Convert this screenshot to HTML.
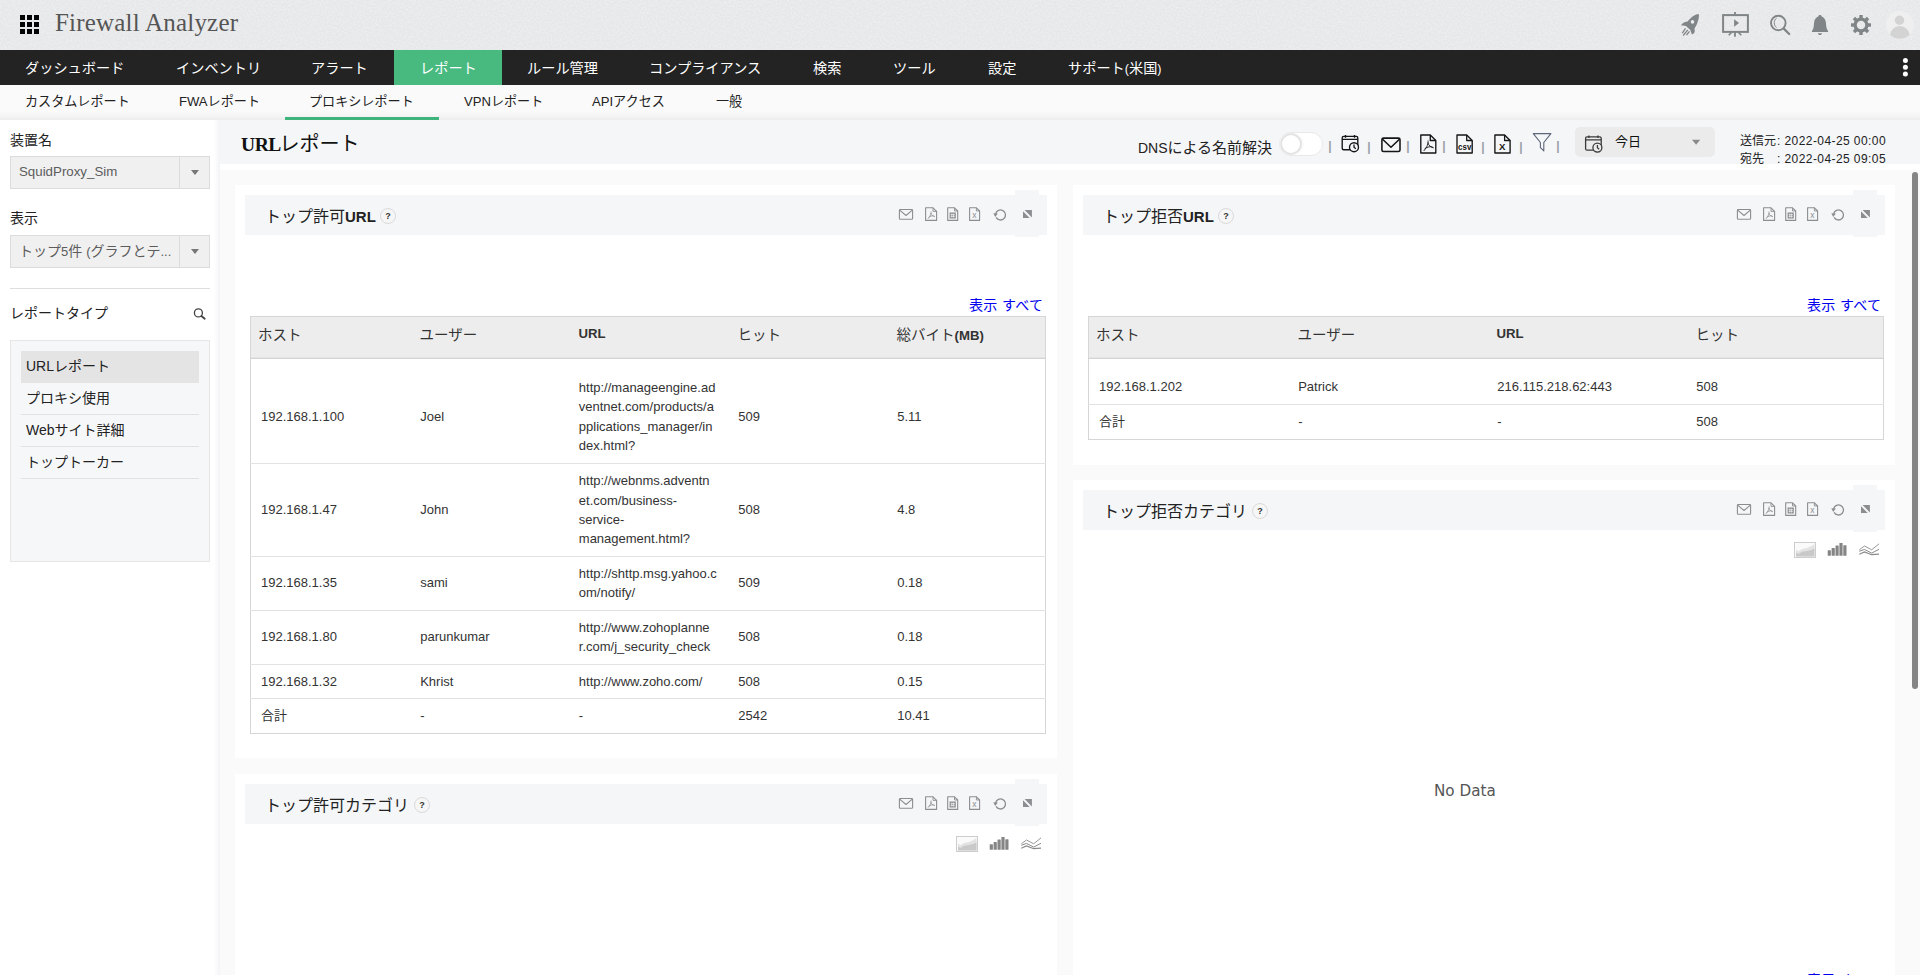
<!DOCTYPE html>
<html lang="ja">
<head>
<meta charset="utf-8">
<title>Firewall Analyzer</title>
<style>
*{box-sizing:border-box;margin:0;padding:0}
html,body{width:1920px;height:975px;overflow:hidden;background:#fafafa}
body{font-family:"Liberation Sans","Noto Sans CJK JP",sans-serif;font-size:13px;color:#333;position:relative}
.abs{position:absolute}
.t{position:absolute;white-space:nowrap;line-height:20px}
/* header */
#hdr{left:0;top:0;width:1920px;height:50px;background:#e6e7e9}
#logo{left:55px;top:8px;font-family:"Liberation Serif","Noto Serif CJK SC",serif;font-size:25px;line-height:30px;color:#555;letter-spacing:.2px}
/* nav */
#nav{left:0;top:50px;width:1920px;height:35px;background:#232323}
#nav .t{color:#fff;font-size:14.200px;top:8px;line-height:20px}
#navact{left:394px;top:0;width:108px;height:35px;background:#48ba80}
/* subnav */
#sub{left:0;top:85px;width:1920px;height:35px;background:linear-gradient(to bottom,#fafafa 0,#fafafa 26px,#f3f3f3 32px,#ececec 35px)}
#sub .t{color:#222;font-size:13.100px;top:7px;line-height:20px}
#subact{left:285px;top:32px;width:154px;height:3px;background:#3fb37c}
/* sidebar */
#side{left:0;top:120px;width:220px;height:855px;background:linear-gradient(to right,#fff 0,#fff 214px,#f9f9fb 217px,#f2f3f6 220px)}
.lbl{font-size:14px;color:#222}
.sel{position:absolute;left:10px;width:200px;height:33px;background:#f0f0f0;border:1px solid #dcdcdc}
.sel .v{position:absolute;left:8px;top:5px;line-height:20px;font-size:13.300px;color:#5c5c5c;white-space:nowrap}
.sel .d{position:absolute;left:168px;top:0;width:1px;height:31px;background:#dcdcdc}
.sel .c{position:absolute;left:180px;top:13px;width:0;height:0;border-left:4px solid transparent;border-right:4px solid transparent;border-top:5px solid #777}
#list{left:10px;top:220px;width:200px;height:222px;background:#f6f7f9;border:1px solid #e6e6e6}
.li{position:absolute;left:10px;width:178px;height:32px;border-bottom:1px solid #e2e2e2;font-size:14px;color:#222;line-height:20px;padding:5px 0 0 5px;white-space:nowrap}
.li.on{background:#e4e4e4;border-bottom-color:#e4e4e4}
/* main */
#tbar{left:220px;top:120px;width:1700px;height:44px;background:#f5f6f8}
#strip{left:220px;top:164px;width:1700px;height:6px;background:#fff}
#ptitle{left:241px;top:130px;font-size:20px;line-height:28px;color:#111}
#ptitle b{font-family:"Liberation Serif","Noto Serif CJK SC",serif;font-weight:bold;font-size:19.500px;letter-spacing:-.4px;margin-right:-1.500px}
.card{position:absolute;background:#fff}
.chd{position:absolute;left:10px;top:10px;height:40px;background:#f5f6f8}
.chd .ttl{position:absolute;left:20px;top:10.500px;font-size:16px;line-height:22px;color:#222;white-space:nowrap}
.chd .ttl b{font-size:15px}
.q{position:absolute;width:16px;height:16px;border-radius:50%;border:1px solid #dadada;background:#f6f6f6;font-size:9px;font-weight:bold;color:#333;line-height:14px;text-align:center}
.exp{position:absolute;top:-5px;width:24px;height:47px;background:#f5f6f8}
.all{position:absolute;font-size:14px;line-height:20px;color:#0000ee;white-space:nowrap;letter-spacing:.35px}
/* tables */
table{position:absolute;border-collapse:collapse;table-layout:fixed;font-size:13px;color:#333}
table,th,td{border:0}
table{border:1px solid #d6d6d6}
th{background:#ededed;text-align:left;font-weight:normal;font-size:14.500px;color:#333;height:42px;padding:0 0 9px 7px;border-bottom:1px solid #d4d4d4;box-shadow:inset 0 -1px 0 #e4e4e4;vertical-align:middle;white-space:nowrap}
td{padding:0 0 0 10px;border-top:1px solid #e2e2e2;vertical-align:middle;line-height:19.3px}
tr.f td{padding-top:11px;border-top:0}
td.u{padding-left:10.300px}
td+td{padding-left:10.700px}
tr.s td{padding-bottom:1px}
th b{font-size:13.200px}
.dt{font-size:12px;color:#222;line-height:18px;letter-spacing:.42px}
.sp{top:139px;font-size:12px;line-height:14px;color:#9a9ea5;width:4px;text-align:center;font-weight:bold}
svg{position:absolute;overflow:visible}
</style>
</head>
<body>

<!-- HEADER -->
<div id="hdr" class="abs">
  <svg width="1920" height="50" style="left:0;top:0"><filter id="nz" x="0" y="0" width="100%" height="100%"><feTurbulence type="fractalNoise" baseFrequency=".55" numOctaves="2" seed="7" result="n"/><feColorMatrix type="matrix" values="0 0 0 0 1  0 0 0 0 1  0 0 0 0 1  1.6 0 0 0 -.55"/></filter><rect width="1920" height="50" filter="url(#nz)" opacity=".42"/></svg>
  <div id="logo" class="t">Firewall Analyzer</div>
</div>

<!-- NAV -->
<div id="nav" class="abs">
  <div id="navact" class="abs"></div>
  <div class="t" style="left:25px">ダッシュボード</div>
  <div class="t" style="left:176px">インベントリ</div>
  <div class="t" style="left:311px">アラート</div>
  <div class="t" style="left:420px">レポート</div>
  <div class="t" style="left:527px">ルール管理</div>
  <div class="t" style="left:649px">コンプライアンス</div>
  <div class="t" style="left:813px">検索</div>
  <div class="t" style="left:893px">ツール</div>
  <div class="t" style="left:988px">設定</div>
  <div class="t" style="left:1068px">サポート<span style="font-size:12.500px">(</span>米国<span style="font-size:12.500px">)</span></div>
</div>

<!-- SUBNAV -->
<div id="sub" class="abs">
  <div id="subact" class="abs"></div>
  <div class="t" style="left:25px">カスタムレポート</div>
  <div class="t" style="left:179px">FWAレポート</div>
  <div class="t" style="left:309px">プロキシレポート</div>
  <div class="t" style="left:464px">VPNレポート</div>
  <div class="t" style="left:592px">APIアクセス</div>
  <div class="t" style="left:716px">一般</div>
</div>

<!-- MAIN BG -->
<div id="tbar" class="abs"></div>
<div id="strip" class="abs"></div>

<!-- SIDEBAR -->
<div id="side" class="abs">
  <div class="t lbl" style="left:10px;top:10px">装置名</div>
  <div class="sel" style="top:36px"><div class="v">SquidProxy_Sim</div><div class="d"></div><div class="c"></div></div>
  <div class="t lbl" style="left:10px;top:88px">表示</div>
  <div class="sel" style="top:115px"><div class="v" style="font-size:14px">トップ<span style="font-size:13px">5</span>件 <span style="font-size:13px">(</span>グラフとテ<span style="font-size:13px">...</span></div><div class="d"></div><div class="c"></div></div>
  <div class="abs" style="left:10px;top:168px;width:200px;height:1px;background:#dedede"></div>
  <div class="t lbl" style="left:10px;top:183px">レポートタイプ</div>
  <div id="list" class="abs">
    <div class="li on" style="top:10px">URLレポート</div>
    <div class="li" style="top:42px">プロキシ使用</div>
    <div class="li" style="top:74px">Webサイト詳細</div>
    <div class="li" style="top:106px">トップトーカー</div>
  </div>
</div>

<div id="ptitle" class="t"><b>URL</b>レポート</div>

<!-- TOOLBAR -->
<div id="tools" class="abs" style="left:0;top:0">
  <div class="t" style="left:1138px;top:138.400px;font-size:15px;color:#222"><span style="font-size:14px">DNS</span>による名前解決</div>
  <div class="abs" style="left:1279px;top:131.700px;width:44px;height:24.300px;border-radius:12.500px;background:#fff;border:1px solid #e9e9e9"></div>
  <div class="abs" style="left:1281.900px;top:134.800px;width:18.600px;height:18.600px;border-radius:50%;background:#fff;box-shadow:0 0 0 1.700px #e2e2e2,1.500px 0 3px 1px rgba(0,0,0,.08)"></div>
  <div class="abs" style="left:1575px;top:127px;width:140px;height:30px;border-radius:5px;background:#ebebeb"></div>
  <div class="t" style="left:1615px;top:132px;font-size:13px;color:#111">今日</div>
  <div class="t" style="left:1740px;top:132px;font-size:12px;color:#222;line-height:18px">送信元</div><div class="t dt" style="left:1777px;top:132px">: 2022-04-25 00:00</div>
  <div class="t" style="left:1740px;top:150.300px;font-size:12px;color:#222;line-height:18px">宛先</div>
  <div class="t dt" style="left:1777px;top:150.300px">: 2022-04-25 09:05</div>
  <div class="t sp" style="left:1328px">|</div><div class="t sp" style="left:1367px;top:140px">|</div><div class="t sp" style="left:1406px">|</div><div class="t sp" style="left:1442px">|</div><div class="t sp" style="left:1481px;top:140px">|</div><div class="t sp" style="left:1519px;top:140px">|</div><div class="t sp" style="left:1556px">|</div>
</div>

<!-- CARD 1 -->
<div class="card" style="left:235px;top:185px;width:822px;height:573px">
  <div class="chd" style="width:802px"><div class="exp" style="left:770px"></div><div class="ttl">トップ許可<b>URL</b></div><div class="q" style="left:135px;top:13px">?</div></div>
  <div class="all" style="left:734px;top:110px">表示 すべて</div>
  <table style="left:15px;top:131px;width:796px">
    <colgroup><col style="width:159px"><col style="width:159px"><col style="width:159px"><col style="width:159px"><col></colgroup>
    <tr><th>ホスト</th><th style="padding-left:10px">ユーザー</th><th style="padding-left:10px"><b class="s">URL</b></th><th style="padding-left:10px">ヒット</th><th style="padding-left:10px">総バイト<b>(MB)</b></th></tr>
    <tr class="f" style="height:105px"><td>192.168.1.100</td><td>Joel</td><td class="u">http://manageengine.ad<br>ventnet.com/products/a<br>pplications_manager/in<br>dex.html?</td><td>509</td><td>5.11</td></tr>
    <tr style="height:93px"><td>192.168.1.47</td><td>John</td><td class="u">http://webnms.adventn<br>et.com/business-<br>service-<br>management.html?</td><td>508</td><td>4.8</td></tr>
    <tr class="s" style="height:54px"><td>192.168.1.35</td><td>sami</td><td class="u">http://shttp.msg.yahoo.c<br>om/notify/</td><td>509</td><td>0.18</td></tr>
    <tr class="s" style="height:54px"><td>192.168.1.80</td><td>parunkumar</td><td class="u">http://www.zohoplanne<br>r.com/j_security_check</td><td>508</td><td>0.18</td></tr>
    <tr style="height:34px"><td>192.168.1.32</td><td>Khrist</td><td class="u">http://www.zoho.com/</td><td>508</td><td>0.15</td></tr>
    <tr style="height:35px"><td>合計</td><td>-</td><td class="u">-</td><td>2542</td><td>10.41</td></tr>
  </table>
</div>

<!-- CARD 2 -->
<div class="card" style="left:235px;top:774px;width:822px;height:201px">
  <div class="chd" style="width:802px"><div class="exp" style="left:770px"></div><div class="ttl">トップ許可カテゴリ</div><div class="q" style="left:169px;top:13px">?</div></div>
</div>

<!-- CARD 3 -->
<div class="card" style="left:1073px;top:185px;width:822px;height:280px">
  <div class="chd" style="width:802px"><div class="exp" style="left:770px"></div><div class="ttl">トップ拒否<b>URL</b></div><div class="q" style="left:135px;top:13px">?</div></div>
  <div class="all" style="left:734px;top:110px">表示 すべて</div>
  <table style="left:15px;top:131px;width:796px">
    <colgroup><col style="width:199px"><col style="width:199px"><col style="width:199px"><col></colgroup>
    <tr><th>ホスト</th><th style="padding-left:10px">ユーザー</th><th style="padding-left:10px"><b class="s">URL</b></th><th style="padding-left:10px">ヒット</th></tr>
    <tr class="f" style="height:46px"><td>192.168.1.202</td><td>Patrick</td><td>216.115.218.62:443</td><td>508</td></tr>
    <tr style="height:35px"><td>合計</td><td>-</td><td>-</td><td>508</td></tr>
  </table>
</div>

<!-- CARD 4 -->
<div class="card" style="left:1073px;top:480px;width:822px;height:495px">
  <div class="chd" style="width:802px"><div class="exp" style="left:770px"></div><div class="ttl">トップ拒否カテゴリ</div><div class="q" style="left:169px;top:13px">?</div></div>
  <div class="t" style="left:361px;top:300.500px;font-family:'DejaVu Sans',sans-serif;font-size:15.200px;color:#555">No Data</div>
  <div class="all" style="left:734px;top:489.500px">表示 すべて</div>
</div>

<!-- SCROLLBAR -->
<div class="abs" style="left:1912px;top:172px;width:6px;height:517px;border-radius:3px;background:#858585"></div>

<svg id="ic" width="1920" height="975" viewBox="0 0 1920 975" style="left:0;top:0;pointer-events:none">
<g fill="#050505"><rect x="20" y="15" width="5" height="5"/><rect x="27" y="15" width="5" height="5"/><rect x="34" y="15" width="5" height="5"/><rect x="20" y="22" width="5" height="5"/><rect x="27" y="22" width="5" height="5"/><rect x="34" y="22" width="5" height="5"/><rect x="20" y="29" width="5" height="5"/><rect x="27" y="29" width="5" height="5"/><rect x="34" y="29" width="5" height="5"/></g>
<g fill="#808587">
<path fill-rule="evenodd" d="M1698.800 14.100C1699.100 16.300 1698.800 18.500 1698.100 20.600C1697.700 22.200 1697.100 23.800 1696.400 25.300L1694.400 28.700C1694.800 29.600 1694.900 30.500 1694.700 31.400C1694.500 32.400 1694.100 33.200 1693.400 33.800C1692.900 34.200 1692.300 34.400 1691.700 34.200C1691.600 33.500 1691.400 32.800 1691 32.100C1690.800 31.300 1690.600 30.600 1690.300 30C1689.900 29.500 1689.500 29.100 1689 28.700L1687.300 27.300C1686.900 26.900 1686.500 26.400 1686.200 26C1684.500 25.400 1682.900 25.300 1681.200 25.600C1681.200 25.100 1681.400 24.700 1681.800 24.300C1682.600 23.400 1683.500 22.700 1684.600 22.300C1685.600 21.900 1686.600 21.700 1687.600 21.600C1688.400 20.500 1689.300 19.500 1690.300 18.500C1691.300 17.500 1692.500 16.600 1693.700 15.800C1695.300 14.900 1697 14.300 1698.800 14.100ZM1692.500 20.100a1.800 1.800 0 1 0 .01 3.600 1.800 1.800 0 0 0-.01-3.600z"/>
<path d="M1685 28.100l1 .7-3.200 4.600-1-.7zM1687.300 29.500l1 .8-4.600 5.600-1-.8zM1689 30.900l1 .8-3 3.700-1-.8z"/>
</g>
<g fill="none" stroke="#808587" stroke-width="2">
<rect x="1723.100" y="15.100" width="24.800" height="16.800"/>
<path d="M1735 12v3M1735 32v4.700" stroke-width="1.800"/>
<path d="M1731.500 32.500l-2.800 2.800M1738.500 32.500l2.800 2.800" stroke-width="1.600"/>
<path d="M1734.100 19.200v7.600l4.900-3.800z" fill="#808587" stroke="none"/>
</g>
<g fill="none" stroke="#808587">
<circle cx="1778.300" cy="23" r="7.300" stroke-width="1.900"/>
<path d="M1783.800 28.600l5.400 5.400" stroke-width="2.300" stroke-linecap="round"/>
<path d="M1776.600 18.200c-3.200 2-3.200 7.200 0 9.200" stroke-width="1"/>
</g>
<g fill="#808587">
<path d="M1820 14.900c1 0 1.700.7 1.700 1.700 2.700 1 4.100 3.500 4.300 6.800.2 3.300.5 5.800 2.100 7.600v1.100h-16.200v-1.100c1.600-1.800 1.900-4.300 2.100-7.600.2-3.300 1.600-5.800 4.300-6.800 0-1 .7-1.700 1.700-1.700z"/>
<path d="M1818 33.200h4c0 1.100-.9 1.800-2 1.800s-2-.7-2-1.800z"/>
</g>
<g fill="#808587"><circle cx="1861" cy="25" r="5.900" fill="none" stroke="#808587" stroke-width="3.300"/><rect x="1859.300" y="15" width="3.400" height="4" transform="rotate(0 1861 25)"/><rect x="1859.300" y="15" width="3.400" height="4" transform="rotate(45 1861 25)"/><rect x="1859.300" y="15" width="3.400" height="4" transform="rotate(90 1861 25)"/><rect x="1859.300" y="15" width="3.400" height="4" transform="rotate(135 1861 25)"/><rect x="1859.300" y="15" width="3.400" height="4" transform="rotate(180 1861 25)"/><rect x="1859.300" y="15" width="3.400" height="4" transform="rotate(225 1861 25)"/><rect x="1859.300" y="15" width="3.400" height="4" transform="rotate(270 1861 25)"/><rect x="1859.300" y="15" width="3.400" height="4" transform="rotate(315 1861 25)"/></g>
<g><clipPath id="av"><circle cx="1899.800" cy="24.900" r="13.900"/></clipPath>
<circle cx="1899.800" cy="24.900" r="13.900" fill="#efefef"/>
<g clip-path="url(#av)" fill="#d3d3d3"><circle cx="1899.500" cy="20.300" r="4.700"/><ellipse cx="1899.800" cy="36" rx="10" ry="10"/></g></g>
<g fill="#fff"><circle cx="1905.400" cy="60.500" r="2.500"/><circle cx="1905.400" cy="67.300" r="2.500"/><circle cx="1905.400" cy="74.100" r="2.500"/></g>
<g fill="none" stroke="#444"><circle cx="198.400" cy="312.900" r="4" stroke-width="1.300"/><path d="M201.400 316l3.300 2.700" stroke-width="1.800" stroke-linecap="round"/></g>
<g fill="none" stroke="#151515" stroke-width="1.35">
<rect x="1342.2" y="136.4" width="15.600" height="13.400" rx="1.500"/>
<path d="M1342.2 139.4h15.600M1345.5 135.1v2.600M1354.5 135.1v2.600"/>
<circle cx="1354.0" cy="147.20000000000002" r="4.500" fill="#f5f6f8"/>
<path d="M1354.0 144.6v2.700l1.800 1.500" stroke-width="1.300"/>
</g>
<g fill="none" stroke="#151515" stroke-width="1.550" stroke-linejoin="round">
<rect x="1381.900" y="138.100" width="18.100" height="13.400" rx="1.600"/>
<path d="M1382.300 139l8.700 8.300 8.700-8.300"/>
</g>
<g><path d="M1420.8 135h9.5l5.5 5.5v12.5h-15z" fill="none" stroke="#151515" stroke-width="1.35" stroke-linejoin="round"/><path d="M1430.3 135v5.5h5.5" fill="none" stroke="#151515" stroke-width="1.36" stroke-linejoin="round"/><path d="M1428 140.500c.6 2.500-.8 6.500-4.300 10.500M1427.800 142.500c.8 3 3 5 6 5.400M1424.500 149c2-1.800 5-2.600 8-2.200" fill="none" stroke="#151515" stroke-width=".9"/></g>
<g><path d="M1457 135h9.7l5.5 5.5v12.5h-15.2z" fill="none" stroke="#151515" stroke-width="1.35" stroke-linejoin="round"/><path d="M1466.7 135v5.5h5.5" fill="none" stroke="#151515" stroke-width="1.275" stroke-linejoin="round"/><text x="1464.700" y="150.100" text-anchor="middle" font-family="Liberation Sans, sans-serif" font-weight="bold" font-size="9.800" fill="#151515" textLength="13.300" lengthAdjust="spacingAndGlyphs">csv</text></g>
<g><path d="M1494.9 135h9.7l5.5 5.5v12.5h-15.2z" fill="none" stroke="#151515" stroke-width="1.35" stroke-linejoin="round"/><path d="M1504.6000000000001 135v5.5h5.5" fill="none" stroke="#151515" stroke-width="1.275" stroke-linejoin="round"/><text x="1502.300" y="150.200" text-anchor="middle" font-family="Liberation Sans, sans-serif" font-weight="bold" font-size="9.600" fill="#151515">X</text></g>
<path d="M1533.300 133.600h17.600l-7.100 8.900v8.400l-3.400-3.200v-5.200z" fill="none" stroke="#5d6578" stroke-width="1.100" stroke-linejoin="round"/>
<g fill="none" stroke="#3a3a3a" stroke-width="1.3">
<rect x="1585.6" y="136.8" width="15.600" height="13.400" rx="1.500"/>
<path d="M1585.6 139.8h15.600M1588.8999999999999 135.5v2.600M1597.8999999999999 135.5v2.600"/>
<circle cx="1597.3999999999999" cy="147.60000000000002" r="4.500" fill="#ebebeb"/>
<path d="M1597.3999999999999 145.0v2.700l1.800 1.500" stroke-width="1.300"/>
</g>
<path d="M1692 139.800h8.200l-4.100 5z" fill="#8a8a8a"/>
<g transform="translate(0 0)"><g fill="none" stroke="#8b8e91" stroke-width="1.100" stroke-linejoin="round"><rect x="899.400" y="209.500" width="13.200" height="9.800" rx=".8"/><path d="M899.700 210.200l6.300 5.300 6.300-5.300"/></g><path d="M925.6 207.8h7.4l3.6 3.6v9.0h-11.0z" fill="none" stroke="#8b8e91" stroke-width="1.1" stroke-linejoin="round"/><path d="M933.0 207.8v3.6h3.6" fill="none" stroke="#8b8e91" stroke-width="0.88"/><path d="M931 211.500c.4 1.800-.6 4.600-3 7.200M930.900 213c.6 2 2 3.400 4 3.700M928.600 217.400c1.400-1.200 3.400-1.800 5.600-1.500" fill="none" stroke="#8b8e91" stroke-width=".8"/><path d="M947.7 207.8h6.8l3.2 3.2v9.4h-10.0z" fill="none" stroke="#8b8e91" stroke-width="1.1" stroke-linejoin="round"/><path d="M954.5 207.8v3.2h3.2" fill="none" stroke="#8b8e91" stroke-width="0.88"/><rect x="949.600" y="212.500" width="6.200" height="6" fill="#8b8e91"/><path d="M950.600 214.600h4.200M950.600 216.400h4.200M951.800 213.600v4M953.600 213.600v4" stroke="#f5f6f8" stroke-width=".7" fill="none"/><path d="M969.6 207.8h6.8l3.2 3.2v9.4h-10.0z" fill="none" stroke="#8b8e91" stroke-width="1.1" stroke-linejoin="round"/><path d="M976.4 207.8v3.2h3.2" fill="none" stroke="#8b8e91" stroke-width="0.88"/><text x="974.400" y="218.300" text-anchor="middle" font-family="Liberation Sans, sans-serif" font-size="8.500" fill="#8b8e91">x</text><path d="M996.100 217.400a5 5 0 1 0 -.5-3.500" fill="none" stroke="#8b8e91" stroke-width="1.300"/><path d="M993.300 213.200l4.600.3-2.700 3.500z" fill="#8b8e91"/><path d="M1024.600 210.100h7.300v7.300zM1023 211.200l6.700 6.700h-6.700z" fill="#8b8e91"/></g>
<g transform="translate(0 589)"><g fill="none" stroke="#8b8e91" stroke-width="1.100" stroke-linejoin="round"><rect x="899.400" y="209.500" width="13.200" height="9.800" rx=".8"/><path d="M899.700 210.200l6.300 5.300 6.300-5.300"/></g><path d="M925.6 207.8h7.4l3.6 3.6v9.0h-11.0z" fill="none" stroke="#8b8e91" stroke-width="1.1" stroke-linejoin="round"/><path d="M933.0 207.8v3.6h3.6" fill="none" stroke="#8b8e91" stroke-width="0.88"/><path d="M931 211.500c.4 1.800-.6 4.600-3 7.200M930.900 213c.6 2 2 3.400 4 3.700M928.600 217.400c1.400-1.200 3.400-1.800 5.600-1.500" fill="none" stroke="#8b8e91" stroke-width=".8"/><path d="M947.7 207.8h6.8l3.2 3.2v9.4h-10.0z" fill="none" stroke="#8b8e91" stroke-width="1.1" stroke-linejoin="round"/><path d="M954.5 207.8v3.2h3.2" fill="none" stroke="#8b8e91" stroke-width="0.88"/><rect x="949.600" y="212.500" width="6.200" height="6" fill="#8b8e91"/><path d="M950.600 214.600h4.200M950.600 216.400h4.200M951.800 213.600v4M953.600 213.600v4" stroke="#f5f6f8" stroke-width=".7" fill="none"/><path d="M969.6 207.8h6.8l3.2 3.2v9.4h-10.0z" fill="none" stroke="#8b8e91" stroke-width="1.1" stroke-linejoin="round"/><path d="M976.4 207.8v3.2h3.2" fill="none" stroke="#8b8e91" stroke-width="0.88"/><text x="974.400" y="218.300" text-anchor="middle" font-family="Liberation Sans, sans-serif" font-size="8.500" fill="#8b8e91">x</text><path d="M996.100 217.400a5 5 0 1 0 -.5-3.500" fill="none" stroke="#8b8e91" stroke-width="1.300"/><path d="M993.300 213.200l4.600.3-2.700 3.500z" fill="#8b8e91"/><path d="M1024.600 210.100h7.300v7.300zM1023 211.200l6.700 6.700h-6.700z" fill="#8b8e91"/></g>
<g transform="translate(838 0)"><g fill="none" stroke="#8b8e91" stroke-width="1.100" stroke-linejoin="round"><rect x="899.400" y="209.500" width="13.200" height="9.800" rx=".8"/><path d="M899.700 210.200l6.300 5.300 6.300-5.300"/></g><path d="M925.6 207.8h7.4l3.6 3.6v9.0h-11.0z" fill="none" stroke="#8b8e91" stroke-width="1.1" stroke-linejoin="round"/><path d="M933.0 207.8v3.6h3.6" fill="none" stroke="#8b8e91" stroke-width="0.88"/><path d="M931 211.500c.4 1.800-.6 4.600-3 7.200M930.900 213c.6 2 2 3.400 4 3.700M928.600 217.400c1.400-1.200 3.400-1.800 5.600-1.500" fill="none" stroke="#8b8e91" stroke-width=".8"/><path d="M947.7 207.8h6.8l3.2 3.2v9.4h-10.0z" fill="none" stroke="#8b8e91" stroke-width="1.1" stroke-linejoin="round"/><path d="M954.5 207.8v3.2h3.2" fill="none" stroke="#8b8e91" stroke-width="0.88"/><rect x="949.600" y="212.500" width="6.200" height="6" fill="#8b8e91"/><path d="M950.600 214.600h4.200M950.600 216.400h4.200M951.800 213.600v4M953.600 213.600v4" stroke="#f5f6f8" stroke-width=".7" fill="none"/><path d="M969.6 207.8h6.8l3.2 3.2v9.4h-10.0z" fill="none" stroke="#8b8e91" stroke-width="1.1" stroke-linejoin="round"/><path d="M976.4 207.8v3.2h3.2" fill="none" stroke="#8b8e91" stroke-width="0.88"/><text x="974.400" y="218.300" text-anchor="middle" font-family="Liberation Sans, sans-serif" font-size="8.500" fill="#8b8e91">x</text><path d="M996.100 217.400a5 5 0 1 0 -.5-3.500" fill="none" stroke="#8b8e91" stroke-width="1.300"/><path d="M993.300 213.200l4.600.3-2.700 3.500z" fill="#8b8e91"/><path d="M1024.600 210.100h7.300v7.300zM1023 211.200l6.700 6.700h-6.700z" fill="#8b8e91"/></g>
<g transform="translate(838 295)"><g fill="none" stroke="#8b8e91" stroke-width="1.100" stroke-linejoin="round"><rect x="899.400" y="209.500" width="13.200" height="9.800" rx=".8"/><path d="M899.700 210.200l6.300 5.300 6.300-5.300"/></g><path d="M925.6 207.8h7.4l3.6 3.6v9.0h-11.0z" fill="none" stroke="#8b8e91" stroke-width="1.1" stroke-linejoin="round"/><path d="M933.0 207.8v3.6h3.6" fill="none" stroke="#8b8e91" stroke-width="0.88"/><path d="M931 211.500c.4 1.800-.6 4.600-3 7.200M930.900 213c.6 2 2 3.400 4 3.700M928.600 217.400c1.400-1.200 3.400-1.800 5.600-1.500" fill="none" stroke="#8b8e91" stroke-width=".8"/><path d="M947.7 207.8h6.8l3.2 3.2v9.4h-10.0z" fill="none" stroke="#8b8e91" stroke-width="1.1" stroke-linejoin="round"/><path d="M954.5 207.8v3.2h3.2" fill="none" stroke="#8b8e91" stroke-width="0.88"/><rect x="949.600" y="212.500" width="6.200" height="6" fill="#8b8e91"/><path d="M950.600 214.600h4.200M950.600 216.400h4.200M951.800 213.600v4M953.600 213.600v4" stroke="#f5f6f8" stroke-width=".7" fill="none"/><path d="M969.6 207.8h6.8l3.2 3.2v9.4h-10.0z" fill="none" stroke="#8b8e91" stroke-width="1.1" stroke-linejoin="round"/><path d="M976.4 207.8v3.2h3.2" fill="none" stroke="#8b8e91" stroke-width="0.88"/><text x="974.400" y="218.300" text-anchor="middle" font-family="Liberation Sans, sans-serif" font-size="8.500" fill="#8b8e91">x</text><path d="M996.100 217.400a5 5 0 1 0 -.5-3.500" fill="none" stroke="#8b8e91" stroke-width="1.300"/><path d="M993.300 213.200l4.600.3-2.700 3.500z" fill="#8b8e91"/><path d="M1024.600 210.100h7.300v7.300zM1023 211.200l6.700 6.700h-6.700z" fill="#8b8e91"/></g>
<g transform="translate(0 0)"><rect x="1794.500" y="542.500" width="21" height="15" fill="#fafafa" stroke="#cdcdcd"/><path d="M1796 556.500v-7l2.500 1.800 3.500-2.300 5-1 4-1.800 3.500-2.200v12.500z" fill="#e3e3e3"/><path d="M1796 556.500v-4l2.500 1.500 3.500-2.300 5-.8 4-1 3.500-1.400v8z" fill="#c9c9c9"/><rect x="1827.7" y="550.3" width="3.200" height="5.4" rx=".5" fill="#858585"/><rect x="1831.6" y="548" width="3.200" height="7.7" rx=".5" fill="#858585"/><rect x="1835.5" y="545.6" width="3.200" height="10.1" rx=".5" fill="#858585"/><rect x="1839.4" y="543.1" width="3.200" height="12.6" rx=".5" fill="#858585"/><rect x="1843.3" y="545.2" width="3.200" height="10.5" rx=".5" fill="#858585"/><path d="M1859.300 549.800l5.200-3.800 7.200 3.800 7.300-6" fill="none" stroke="#8a8a8a" stroke-width=".9"/><path d="M1859.300 551.300l5.200-1.900 7.200 3.700 7.300-3.800" fill="none" stroke="#8a8a8a" stroke-width="1"/><path d="M1859.300 554.200l5.200-2.200 7.200 2.700 7.300-.6" fill="none" stroke="#8a8a8a" stroke-width="1.200"/></g>
<g transform="translate(-838 294)"><rect x="1794.500" y="542.500" width="21" height="15" fill="#fafafa" stroke="#cdcdcd"/><path d="M1796 556.500v-7l2.500 1.800 3.500-2.300 5-1 4-1.800 3.500-2.200v12.500z" fill="#e3e3e3"/><path d="M1796 556.500v-4l2.500 1.500 3.500-2.300 5-.8 4-1 3.500-1.400v8z" fill="#c9c9c9"/><rect x="1827.7" y="550.3" width="3.200" height="5.4" rx=".5" fill="#858585"/><rect x="1831.6" y="548" width="3.200" height="7.7" rx=".5" fill="#858585"/><rect x="1835.5" y="545.6" width="3.200" height="10.1" rx=".5" fill="#858585"/><rect x="1839.4" y="543.1" width="3.200" height="12.6" rx=".5" fill="#858585"/><rect x="1843.3" y="545.2" width="3.200" height="10.5" rx=".5" fill="#858585"/><path d="M1859.300 549.800l5.200-3.800 7.200 3.800 7.300-6" fill="none" stroke="#8a8a8a" stroke-width=".9"/><path d="M1859.300 551.300l5.200-1.900 7.200 3.700 7.300-3.800" fill="none" stroke="#8a8a8a" stroke-width="1"/><path d="M1859.300 554.200l5.200-2.200 7.200 2.700 7.300-.6" fill="none" stroke="#8a8a8a" stroke-width="1.200"/></g>
<!--MORE-->
</svg>
</body>
</html>
